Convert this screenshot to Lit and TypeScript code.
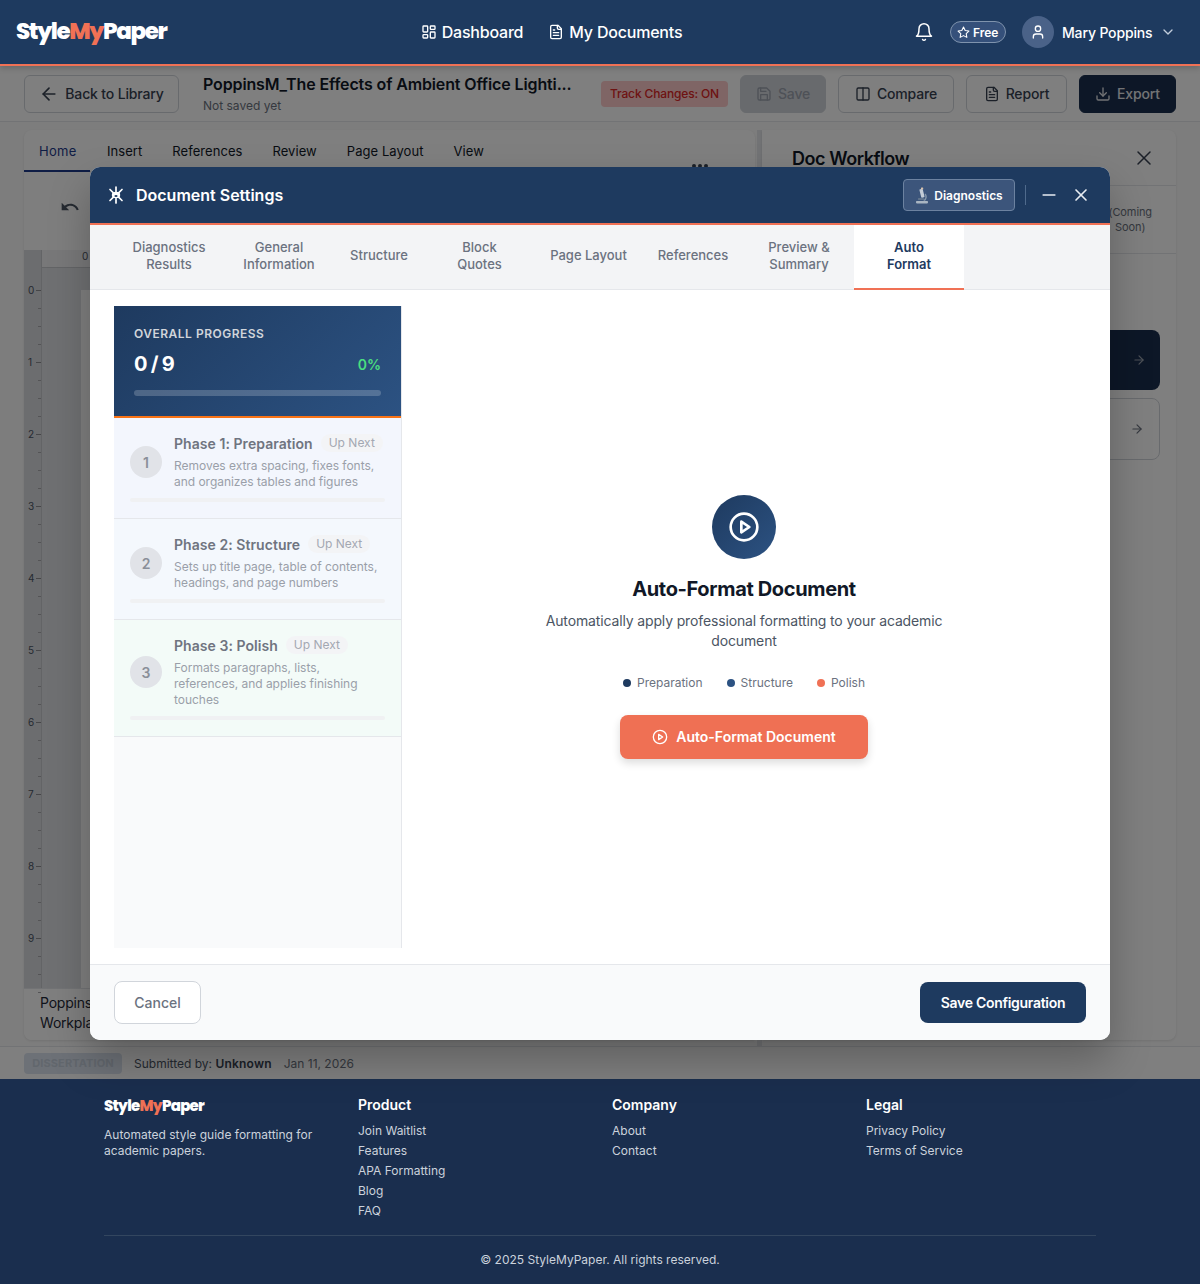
import { LitElement, html, css, svg } from "lit";
import { customElement } from "lit/decorators.js";

const ic = (size: number, body: unknown, sw = 2) => html`<svg class="ic" width=${size} height=${size} viewBox="0 0 24 24" fill="none" stroke="currentColor" stroke-width=${sw} stroke-linecap="round" stroke-linejoin="round">${body}</svg>`;

const I = {
  dash: svg`<rect x="3" y="3" width="7" height="9" rx="1"/><rect x="14" y="3" width="7" height="5" rx="1"/><rect x="14" y="12" width="7" height="9" rx="1"/><rect x="3" y="16" width="7" height="5" rx="1"/>`,
  file: svg`<path d="M15 2H6a2 2 0 0 0-2 2v16a2 2 0 0 0 2 2h12a2 2 0 0 0 2-2V7z"/><path d="M14 2v4a2 2 0 0 0 2 2h4"/><path d="M10 9H8"/><path d="M16 13H8"/><path d="M16 17H8"/>`,
  bell: svg`<path d="M10.3 21a1.94 1.94 0 0 0 3.4 0"/><path d="M6 8a6 6 0 0 1 12 0c0 7 3 9 3 9H3s3-2 3-9"/>`,
  star: svg`<path d="M12 2l3.09 6.26L22 9.27l-5 4.87 1.18 6.88L12 17.77l-6.18 3.25L7 14.14 2 9.27l6.91-1.01z"/>`,
  user: svg`<path d="M19 21v-2a4 4 0 0 0-4-4H9a4 4 0 0 0-4 4v2"/><circle cx="12" cy="7" r="4"/>`,
  chev: svg`<path d="m6 9 6 6 6-6"/>`,
  left: svg`<path d="m12 19-7-7 7-7"/><path d="M19 12H5"/>`,
  right: svg`<path d="M5 12h14"/><path d="m12 5 7 7-7 7"/>`,
  save: svg`<path d="M19 21H5a2 2 0 0 1-2-2V5a2 2 0 0 1 2-2h11l5 5v11a2 2 0 0 1-2 2z"/><path d="M17 21v-8H7v8"/><path d="M7 3v5h8"/>`,
  cols: svg`<rect x="3" y="3" width="18" height="18" rx="2"/><path d="M12 3v18"/>`,
  down: svg`<path d="M21 15v4a2 2 0 0 1-2 2H5a2 2 0 0 1-2-2v-4"/><path d="m7 10 5 5 5-5"/><path d="M12 15V3"/>`,
  x: svg`<path d="M18 6 6 18"/><path d="m6 6 12 12"/>`,
  minus: svg`<path d="M5 12h14"/>`,
  play: svg`<circle cx="12" cy="12" r="10"/><path d="m10 8 6 4-6 4z"/>`,
};

const undo = html`<svg class="ic" width="20" height="20" viewBox="0 0 24 24" fill="currentColor"><path d="M12.5 8c-2.65 0-5.05.99-6.9 2.6L2 7v9h9l-3.62-3.62c1.39-1.16 3.16-1.88 5.12-1.88 3.54 0 6.55 2.31 7.6 5.5l2.37-.78C21.08 11.03 17.15 8 12.5 8z"/></svg>`;

const gear = html`<svg width="18" height="18" viewBox="0 0 18 18" fill="none" stroke="#fff" stroke-width="1.7" stroke-linecap="round"><path d="M9 1v4.5M9 12.5V17M3 3.5l3.4 3.3M11.6 11.2 15 14.5M15 3.5l-3.4 3.3M6.4 11.2 3 14.5"/><ellipse cx="9" cy="9" rx="4.2" ry="3.2" fill="#fff" stroke="none"/><ellipse cx="9" cy="10" rx="1.6" ry=".9" fill="#1e3a5f" stroke="none"/></svg>`;

const scope = html`<svg width="14" height="17" viewBox="0 0 14 17"><rect x="1" y="14" width="12" height="2.4" rx=".8" fill="#a9b5c2"/><path d="M9.5 14a5 5 0 0 0 1-7.6l-1 1.2a3.4 3.4 0 0 1-1.4 5.4z" fill="#8496a9"/><rect x="5.2" y="2" width="3.4" height="8.6" rx=".8" transform="rotate(-14 7 6)" fill="#c3ccd6"/><rect x="6" y=".6" width="2.2" height="2" rx=".5" fill="#d9c2ac"/><rect x="3" y="11.2" width="6" height="1.6" rx=".5" fill="#6d7f92"/></svg>`;

const tabs: { l: string; w: number; a?: boolean }[] = [
  { l: "Diagnostics Results", w: 110 }, { l: "General Information", w: 110 }, { l: "Structure", w: 90 },
  { l: "Block Quotes", w: 111 }, { l: "Page Layout", w: 107 }, { l: "References", w: 102 },
  { l: "Preview & Summary", w: 110 }, { l: "Auto Format", w: 110, a: true },
];

const phases = [
  { n: 1, t: "Phase 1: Preparation", d: "Removes extra spacing, fixes fonts, and organizes tables and figures", c: "p1" },
  { n: 2, t: "Phase 2: Structure", d: "Sets up title page, table of contents, headings, and page numbers", c: "p2" },
  { n: 3, t: "Phase 3: Polish", d: "Formats paragraphs, lists, references, and applies finishing touches", c: "p3" },
];

const footerCols: [string, string[]][] = [
  ["Product", ["Join Waitlist", "Features", "APA Formatting", "Blog", "FAQ"]],
  ["Company", ["About", "Contact"]],
  ["Legal", ["Privacy Policy", "Terms of Service"]],
];

@customElement("app-root")
export class AppRoot extends LitElement {
  static styles = css`
    :host { display: block; width: 1200px; height: 1284px; overflow: hidden; font-family: Inter, "Liberation Sans", sans-serif; color: #111827; background: #fff; }
    * { box-sizing: border-box; }
    .ic { display: block; flex: none; }
    .logo { font-family: Poppins, Inter, "Liberation Sans", sans-serif; font-weight: 800; color: #fff; white-space: nowrap; }
    .logo b { color: #f07155; font-weight: 800; }

    .hdr { height: 66px; background: #1e3a5f; border-bottom: 2px solid #f07155; display: flex; align-items: center; justify-content: space-between; padding: 0 24px 0 16px; color: #fff; position: relative; z-index: 3; box-shadow: 0 2px 6px rgba(0,0,0,.2); }
    .hdr .logo { font-size: 23px; letter-spacing: -1.4px; width: 152px; margin-bottom: 2px; }
    .nav { display: flex; gap: 25px; margin-left: 21px; font-size: 16px; font-weight: 500; letter-spacing: -.2px; }
    .nav span { display: flex; align-items: center; gap: 5px; }
    .rt { display: flex; align-items: center; }
    .free { display: flex; align-items: center; gap: 3px; width: 56px; height: 22px; margin: 0 16px; padding-left: 6px; border: 1px solid #7f93ad; background: #35507a; border-radius: 11px; font-size: 12px; font-weight: 600; }
    .ava { width: 32px; height: 32px; border-radius: 50%; background: #4a6288; display: flex; align-items: center; justify-content: center; }
    .name { font-size: 14px; font-weight: 500; letter-spacing: -.15px; margin: 0 8px; width: 90px; white-space: nowrap; }
    .rt .chev { color: #c2cddb; }

    .main { position: relative; height: 1013px; }
    .under { height: 100%; display: flex; flex-direction: column; background: #fff; }
    .bar { height: 56px; flex: none; display: flex; align-items: center; padding: 0 24px; border-bottom: 1px solid #e5e7eb; background: #fff; font-size: 14px; font-weight: 500; letter-spacing: -.15px; color: #374151; }
    .btn { height: 38px; display: flex; align-items: center; justify-content: center; gap: 6px; border: 1px solid #d1d5db; border-radius: 6px; background: #fff; }
    .back { width: 155px; }
    .doc { width: 398px; margin-left: 24px; }
    .doc h2 { margin: 0; font-size: 16px; line-height: 20px; font-weight: 600; letter-spacing: -.13px; white-space: nowrap; color: #111827; }
    .doc p { margin: 4px 0 0; font-size: 12px; line-height: 16px; font-weight: 400; letter-spacing: 0; color: #6b7280; }
    .track { width: 127px; height: 26px; display: flex; align-items: center; justify-content: center; background: #fecaca; border-radius: 4px; color: #dc2626; font-size: 12px; margin-right: 12px; }
    .save { width: 86px; background: #d1d5db; border-color: #d1d5db; color: #9ca3af; margin-right: 12px; border-radius: 6px; }
    .cmp { width: 116px; margin-right: 12px; }
    .rep { width: 101px; margin-right: 12px; }
    .exp { width: 97px; background: #1a2e4e; border-color: #1a2e4e; color: #e5e7eb; }

    .work { flex: 1; display: flex; padding: 8px 24px 0; min-height: 0; border-bottom: 1px solid #e5e7eb; background: #fbfbfb; }
    .ed { width: 731px; height: 910px; background: #fff; border-radius: 8px 8px 0 8px; display: flex; flex-direction: column; box-shadow: 0 1px 3px rgba(0,0,0,.1); overflow: hidden; }
    .rib { height: 42px; flex: none; display: flex; gap: 30px; align-items: center; padding: 0 15px; font-size: 13px; letter-spacing: .06px; color: #111827; position: relative; border-bottom: 1px solid #e5e7eb; }
    .rib .on { color: #1e3a8a; min-width: 38px; letter-spacing: .3px; }
    .rib .u { position: absolute; left: 0; bottom: -1px; width: 66px; height: 2px; background: #1e3a8a; }
    .rib .dots { position: absolute; left: 668px; top: 34px; display: flex; gap: 2px; }
    .rib .dots i { width: 4px; height: 4px; border-radius: 50%; background: #374151; }
    .tools { height: 78px; flex: none; padding: 25px 0 0 36px; color: #4b5563; background: #fdfdfd; }
    .canvas { flex: 1; min-height: 0; background: #dfe0e4; display: flex; }
    .vr { width: 18px; flex: none; padding-top: 40px; background: #d9dade; border-right: 1px solid #c7c8cc; font-size: 10px; color: #4b5563; }
    .seg { height: 72px; display: flex; flex-direction: column; position: relative; }
    .seg em { position: absolute; left: 4px; top: -6px; font-style: normal; }
    .seg i { height: 18px; border-top: 1px solid #a8a9ad; margin-left: 14px; }
    .seg i:first-of-type { margin-left: 12px; border-top-color: #8c8d91; }
    .cv { flex: 1; display: flex; flex-direction: column; min-width: 0; }
    .hr { height: 18px; flex: none; background: #f0f0f2; border-bottom: 1px solid #c7c8cc; padding-left: 40px; font-size: 10px; color: #4b5563; line-height: 12px; }
    .pg { flex: 1; margin: 22px 0 0 39px; background: #fff; }
    .edfoot { height: 52px; flex: none; background: #fff; border-top: 1px solid #e5e7eb; padding: 4px 16px; font-size: 14px; line-height: 20px; letter-spacing: -.2px; color: #1f2937; }
    .gut { width: 5px; flex: none; margin-left: 2px; background: #e5e7eb; }
    .wf { flex: 1; height: 910px; background: #fff; border-radius: 0 8px 8px 0; box-shadow: 0 1px 3px rgba(0,0,0,.1); display: flex; flex-direction: column; }
    .wfh { height: 56px; flex: none; display: flex; align-items: center; justify-content: space-between; padding: 0 20px 0 30px; border-bottom: 1px solid #e5e7eb; color: #374151; }
    .wfh h3 { margin: 2px 0 0; font-size: 18px; font-weight: 600; letter-spacing: -.45px; color: #111827; }
    .wft { height: 68px; flex: none; border-bottom: 1px solid #e5e7eb; display: flex; justify-content: flex-end; align-items: center; padding-right: 24px; font-size: 11px; line-height: 15px; letter-spacing: -.1px; color: #6b7280; text-align: center; }
    .wfb { padding: 76px 16px 0; display: flex; flex-direction: column; gap: 8px; }
    .wb { height: 60px; border-radius: 8px; display: flex; justify-content: flex-end; align-items: center; padding-right: 14px; background: #1a2e4e; color: #9ca3af; }
    .wb.o { height: 62px; background: #fff; border: 1px solid #d1d5db; color: #6b7280; padding-right: 15px; }
    .stat { height: 32px; flex: none; display: flex; align-items: center; padding: 0 24px; gap: 12px; background: #fff; font-size: 12px; color: #4b5563; }
    .stat .tag { width: 98px; height: 21px; display: flex; align-items: center; justify-content: center; background: #dbe3ee; border-radius: 4px; color: #c4cedb; font-size: 11px; font-weight: 700; letter-spacing: .1px; }
    .stat b { color: #374151; font-weight: 600; letter-spacing: .2px; }
    .stat .dt { color: #6b7280; }

    .ov { position: absolute; inset: 0; background: rgba(0,0,0,.5); padding: 101px 0 0 90px; }
    .modal { width: 1020px; height: 873px; background: #fff; border-radius: 10px; display: flex; flex-direction: column; overflow: hidden; box-shadow: 0 20px 40px rgba(0,0,0,.25); }
    .mh { height: 58px; flex: none; background: #1e3a5f; border-bottom: 2px solid #f07155; display: flex; align-items: center; padding: 0 19px 0 17px; color: #fff; }
    .mh h1 { margin: 0 0 0 11px; font-size: 16px; font-weight: 600; flex: 1; }
    .diag { width: 112px; height: 32px; display: flex; align-items: center; justify-content: center; gap: 2px; border: 1px solid #6c82a0; background: #3c557b; border-radius: 4px; font-size: 12px; font-weight: 600; }
    .sep { width: 1px; height: 20px; background: #4f6a8c; margin: 0 13px 0 10px; }
    .mh .ctl { display: flex; align-items: center; gap: 12px; color: #e8ecf2; }
    .tb { height: 65px; flex: none; display: flex; padding-left: 24px; background: #f3f4f6; border-bottom: 1px solid #e5e7eb; }
    .t { flex: none; padding: 0 0 3px; height: 64px; display: flex; align-items: center; justify-content: center; text-align: center; font-size: 13px; line-height: 17px; font-weight: 500; color: #6b7280; white-space: nowrap; }
    .t.w { padding: 0 24px 3px; white-space: normal; }
    .t.a { background: #fff; color: #1e3a5f; font-weight: 600; border-bottom: 2px solid #f07155; height: 65px; padding: 0 28px 2px; }
    .mb { flex: 1; min-height: 0; display: flex; padding: 16px 24px; }
    .side { width: 288px; flex: none; background: #f9fafb; border-right: 1px solid #e5e7eb; display: flex; flex-direction: column; }
    .prog { height: 112px; flex: none; background: linear-gradient(135deg, #1e3a5f, #2c5282); border-bottom: 2px solid #f97316; padding: 20px 20px 0; color: #fff; }
    .prog .l { font-size: 12px; line-height: 16px; font-weight: 600; letter-spacing: .5px; color: #d1d5db; }
    .prog .r { display: flex; justify-content: space-between; align-items: center; margin-top: 10px; height: 24px; }
    .prog .c { font-size: 20px; font-weight: 700; word-spacing: -1.5px; }
    .prog .p { font-size: 14px; font-weight: 600; color: #4ade80; }
    .prog .tr { height: 6px; border-radius: 3px; background: rgba(255,255,255,.2); margin-top: 14px; }
    .ph { padding: 16px 16px 16px; border-bottom: 1px solid #e5e7eb; }
    .ph.p1 { background: #f3f6fd; }
    .ph.p2 { background: #f4f8fd; }
    .ph.p3 { background: #f3fbf8; }
    .ph .top { display: flex; align-items: center; gap: 12px; }
    .num { width: 32px; height: 32px; flex: none; border-radius: 50%; background: #e1e3e8; color: #8a8f99; display: flex; align-items: center; justify-content: center; font-size: 14px; font-weight: 600; }
    .ph .tt { display: flex; align-items: center; gap: 8px; height: 20px; margin-top: -1px; }
    .ph .tt b { font-size: 14px; font-weight: 600; letter-spacing: .05px; color: #6f7480; white-space: nowrap; }
    .ph .tt span { font-size: 12px; line-height: 18px; padding: 0 8px; border-radius: 9px; background: #f3f4f6; color: #a3a8b2; white-space: nowrap; }
    .ph p { margin: 5px 0 0; font-size: 12px; line-height: 16px; letter-spacing: -.03px; color: #9a9fa9; width: 211px; }
    .ph .pb { height: 4px; border-radius: 2px; background: #f0f1f3; margin-top: 8px; }
    .ctr { flex: 1; display: flex; flex-direction: column; align-items: center; justify-content: center; text-align: center; }
    .big { width: 64px; height: 64px; border-radius: 50%; background: linear-gradient(135deg, #1e3a5f, #2c5282); color: #fff; display: flex; align-items: center; justify-content: center; }
    .ctr h2 { margin: 16px 0 8px; font-size: 20px; line-height: 28px; font-weight: 700; letter-spacing: -.35px; color: #111827; }
    .ctr p { margin: 0; width: 400px; font-size: 14px; line-height: 20px; letter-spacing: -.14px; color: #4b5563; }
    .leg { display: flex; gap: 24px; margin-top: 24px; font-size: 12px; line-height: 16px; color: #6b7280; }
    .leg span { display: flex; align-items: center; gap: 6px; }
    .leg i { width: 8px; height: 8px; border-radius: 50%; }
    .go { margin-top: 24px; width: 248px; height: 44px; padding-bottom: 1px; border-radius: 8px; background: #ef7054; color: #fff; display: flex; align-items: center; justify-content: center; gap: 8px; font-size: 14px; font-weight: 600; box-shadow: 0 4px 8px rgba(0,0,0,.14); }
    .mf { height: 76px; flex: none; background: #f9fafb; border-top: 1px solid #e5e7eb; display: flex; align-items: center; justify-content: space-between; padding: 0 24px; font-size: 14px; font-weight: 500; }
    .cancel { width: 87px; height: 43px; border: 1px solid #d1d5db; border-radius: 8px; background: #fff; color: #6b7280; display: flex; align-items: center; justify-content: center; }
    .sv { width: 166px; height: 41px; border-radius: 8px; background: #1e3a5f; color: #fff; font-weight: 600; letter-spacing: -.3px; display: flex; align-items: center; justify-content: center; }

    .ft { height: 205px; background: #1a2e4e; padding: 16px 104px 0; color: #cbd2dc; font-size: 12px; }
    .grid { display: grid; grid-template-columns: repeat(4, 230px); gap: 24px; height: 141px; border-bottom: 1px solid #33465f; }
    .ft .logo { font-size: 15px; line-height: 20px; letter-spacing: -.75px; margin-top: 1px; }
    .ft p { margin: 11px 0 0; line-height: 16px; }
    .ft h4 { margin: 0 0 8px; font-size: 14px; line-height: 20px; font-weight: 600; color: #fff; }
    .ft a { display: block; line-height: 16px; margin-bottom: 4px; }
    .copy { text-align: center; margin-top: 16px; line-height: 16px; }
  `;

  private seg(n: number) {
    return html`<div class="seg"><em>${n}</em><i></i><i></i><i></i><i></i></div>`;
  }

  private under() {
    return html`<div class="under">
      <div class="bar">
        <div class="btn back">${ic(20, I.left)}Back to Library</div>
        <div class="doc"><h2>PoppinsM_The Effects of Ambient Office Lighti...</h2><p>Not saved yet</p></div>
        <div class="track">Track Changes: ON</div>
        <div class="btn save">${ic(16, I.save)}Save</div>
        <div class="btn cmp">${ic(16, I.cols)}Compare</div>
        <div class="btn rep">${ic(16, I.file)}Report</div>
        <div class="btn exp">${ic(16, I.down)}Export</div>
      </div>
      <div class="work">
        <div class="ed">
          <div class="rib"><span class="on">Home</span><span>Insert</span><span>References</span><span>Review</span><span>Page Layout</span><span>View</span><i class="u"></i><div class="dots"><i></i><i></i><i></i></div></div>
          <div class="tools">${undo}</div>
          <div class="canvas">
            <div class="vr">${[0,1,2,3,4,5,6,7,8,9].map((n) => this.seg(n))}</div>
            <div class="cv"><div class="hr">0</div><div class="pg"></div></div>
          </div>
          <div class="edfoot">Poppins<br>Workpla</div>
        </div>
        <div class="gut"></div>
        <div class="wf">
          <div class="wfh"><h3>Doc Workflow</h3>${ic(24, I.x, 1.5)}</div>
          <div class="wft">(Coming<br>Soon)</div>
          <div class="wfb"><div class="wb">${ic(14, I.right)}</div><div class="wb o">${ic(14, I.right)}</div></div>
        </div>
      </div>
      <div class="stat"><span class="tag">DISSERTATION</span><span>Submitted by: <b>Unknown</b></span><span class="dt">Jan 11, 2026</span></div>
    </div>`;
  }

  private modal() {
    return html`<div class="ov"><div class="modal">
      <div class="mh">${gear}<h1>Document Settings</h1>
        <div class="diag">${scope}&nbsp;Diagnostics</div><div class="sep"></div>
        <div class="ctl">${ic(20, I.minus)}${ic(20, I.x)}</div></div>
      <div class="tb">${tabs.map((t) => html`<div class="t ${t.w === 110 || t.w === 111 ? "w" : ""} ${t.a ? "a" : ""}" style="width:${t.w}px">${t.l}</div>`)}</div>
      <div class="mb">
        <div class="side">
          <div class="prog"><div class="l">OVERALL PROGRESS</div><div class="r"><span class="c">0 / 9</span><span class="p">0%</span></div><div class="tr"></div></div>
          ${phases.map((p) => html`<div class="ph ${p.c}"><div class="top"><div class="num">${p.n}</div><div><div class="tt"><b>${p.t}</b><span>Up Next</span></div><p>${p.d}</p></div></div><div class="pb"></div></div>`)}
        </div>
        <div class="ctr">
          <div class="big">${ic(32, I.play)}</div>
          <h2>Auto-Format Document</h2>
          <p>Automatically apply professional formatting to your academic document</p>
          <div class="leg"><span><i style="background:#1e3a5f"></i>Preparation</span><span><i style="background:#2c5282"></i>Structure</span><span><i style="background:#f07155"></i>Polish</span></div>
          <div class="go">${ic(16, I.play)}Auto-Format Document</div>
        </div>
      </div>
      <div class="mf"><div class="cancel">Cancel</div><div class="sv">Save Configuration</div></div>
    </div></div>`;
  }

  render() {
    return html`
      <header class="hdr">
        <div class="logo">Style<b>My</b>Paper</div>
        <nav class="nav"><span>${ic(16, I.dash)}Dashboard</span><span>${ic(16, I.file)}My Documents</span></nav>
        <div class="rt">${ic(20, I.bell, 1.8)}<div class="free">${ic(13, I.star)}Free</div><div class="ava">${ic(16, I.user)}</div><div class="name">Mary Poppins</div><span class="chev">${ic(16, I.chev)}</span></div>
      </header>
      <div class="main">${this.under()}${this.modal()}</div>
      <footer class="ft">
        <div class="grid">
          <div><div class="logo">Style<b>My</b>Paper</div><p>Automated style guide formatting for academic papers.</p></div>
          ${footerCols.map(([h, ls]) => html`<div><h4>${h}</h4>${ls.map((l) => html`<a>${l}</a>`)}</div>`)}
        </div>
        <div class="copy">© 2025 StyleMyPaper. All rights reserved.</div>
      </footer>`;
  }
}
